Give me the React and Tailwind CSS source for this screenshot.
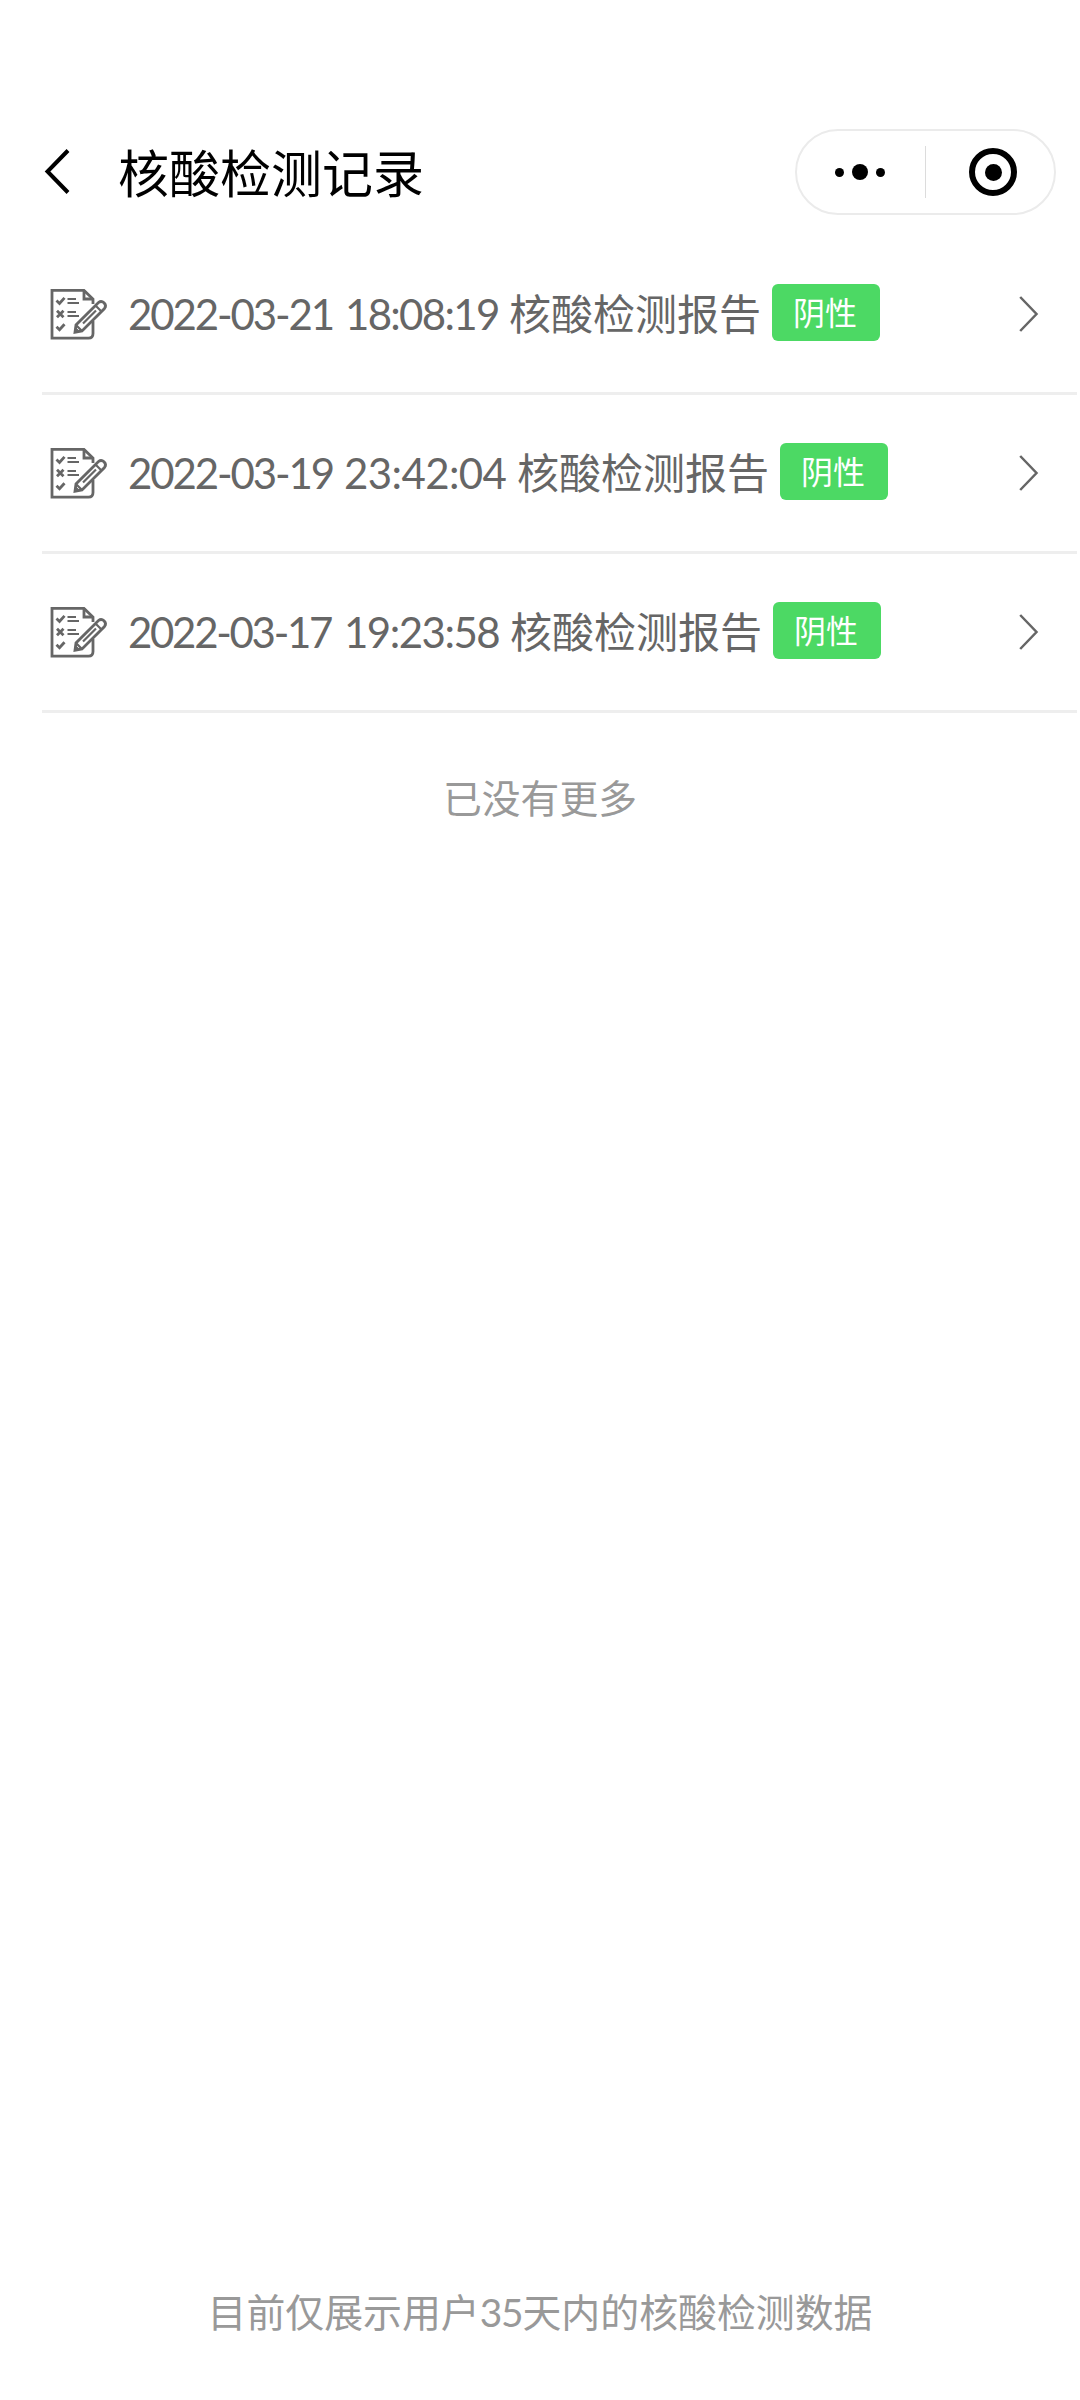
import React from "react";

const records = [
  { id: 1, date: "2022-03-21", time: "18:08:19", result: "阴性", dateSize: "w-[217px] tracking-[-2.1px]", timeSize: "w-[164px] tracking-[-1.7px]" },
  { id: 2, date: "2022-03-19", time: "23:42:04", result: "阴性", dateSize: "w-[216px] tracking-[-2.1px]", timeSize: "w-[173px] tracking-[-0.6px]" },
  { id: 3, date: "2022-03-17", time: "19:23:58", result: "阴性", dateSize: "w-[216px] tracking-[-2.3px]", timeSize: "w-[166px] tracking-[-1.5px]" },
];

const BackIcon = () => (
  <svg className="h-[48px] w-[28px] shrink-0" viewBox="0 0 28 48" fill="none">
    <path d="M25 2.5 L4.5 23.5 L25 44.5" stroke="#000" strokeWidth="4" />
  </svg>
);

const ReportIcon = () => (
  <svg
    className="h-[52px] w-[60px] shrink-0"
    viewBox="0 0 60 52"
    fill="none"
    stroke="#666"
    strokeWidth="2.8"
  >
    {/* sheet with a folded corner */}
    <path d="M44 16 V11 L35 2.4 H3 V50.2 H39.5 Q44 50.2 44 45.5 V33" />
    <path d="M35 2.4 V11 H44" />
    {/* check marks */}
    <path d="M7.5 12.5 L10.5 15.5 L15.5 9.8" />
    <path d="M8 22.8 L14.5 29.3 M14.5 22.8 L8 29.3" />
    <path d="M7.5 38.8 L10.5 41.8 L15.5 36.2" />
    <path d="M18.5 11 H27 M18.5 15 H30 M18.5 24 H27 M18.5 28 H30" strokeWidth="2.2" />
    {/* pencil */}
    <path d="M26 44.2 L27 37 L49.5 14.5 Q52.3 12.2 55 14.8 Q57.8 17.6 55.5 20.5 L33 43 Z" fill="#fff" />
    <path d="M27 37 L33 43 M46.5 17.5 L52.5 23.5 M34 35.5 L47 22.5" strokeWidth="2.2" />
    <path d="M26 44.2 L26.6 39.5 L30.5 43.4 Z" fill="#666" strokeWidth="1" />
  </svg>
);

const ArrowIcon = () => (
  <svg className="h-[36px] w-[20px] shrink-0" viewBox="0 0 20 36" fill="none">
    <path d="M1.2 1 L17.5 18 L1.2 35" stroke="#666" strokeWidth="2.5" />
  </svg>
);

const Capsule = () => (
  <div className="flex h-[86px] w-[261px] items-center rounded-full border-2 border-[#ebebeb]">
    <div className="flex w-[128px] items-center justify-center gap-[8px] pr-[2px]">
      <span className="h-[9px] w-[9px] rounded-full bg-black"></span>
      <span className="h-[16px] w-[16px] rounded-full bg-black"></span>
      <span className="h-[9px] w-[9px] rounded-full bg-black"></span>
    </div>
    <div className="h-[52px] w-px bg-[#dcdcdc]"></div>
    <div className="ml-[43px] flex h-[48px] w-[48px] items-center justify-center rounded-full border-[6px] border-black">
      <span className="h-[17px] w-[17px] rounded-full bg-black"></span>
    </div>
  </div>
);

const App = () => {
  return (
    <div className="flex h-[2400px] w-[1080px] flex-col bg-white font-['Noto_Sans_CJK_SC',sans-serif]">
      <header className="mt-[108px] flex h-[128px] items-center pr-[24px] pl-[43px]">
        <BackIcon />
        <h1 className="mb-[2px] ml-[47px] text-[51px] leading-[60px] text-black">核酸检测记录</h1>
        <div className="ml-auto">
          <Capsule />
        </div>
      </header>

      <ul className="mr-[3px] ml-[42px]">
        {records.map((item) => (
          <li
            key={item.id}
            className="flex h-[159px] items-start border-b-[3px] border-[#eeeeee] pr-[38px] pl-[7px] whitespace-nowrap text-[#666]"
          >
            <div className="flex h-[156px] items-center">
              <ReportIcon />
            </div>
            <div className="ml-[19px] flex h-[156px] items-center text-[42px] leading-[60px]">
              <span className={`font-[Lato] ${item.dateSize}`}>{item.date}</span>
              <span className={`font-[Lato] ${item.timeSize}`}>{item.time}</span>
              <span className="mb-[4px]">核酸检测报告</span>
            </div>
            <span className="mt-[48px] ml-[11px] flex h-[57px] w-[108px] items-center justify-center rounded-[6px] bg-[#4cd964] pr-[2px] pb-[3px] text-[32px] leading-[40px] text-white">
              {item.result}
            </span>
            <div className="ml-auto flex h-[156px] items-center">
              <ArrowIcon />
            </div>
          </li>
        ))}
      </ul>

      <p className="mt-[53px] text-center text-[38.8px] leading-[60px] text-[#999]">已没有更多</p>

      <footer className="mt-auto mb-[58px] text-center text-[38.9px] leading-[60px] text-[#999]">
        目前仅展示用户<span className="font-[Lato] tracking-[-1.2px]">35</span>天内的核酸检测数据
      </footer>
    </div>
  );
};

export default App;
